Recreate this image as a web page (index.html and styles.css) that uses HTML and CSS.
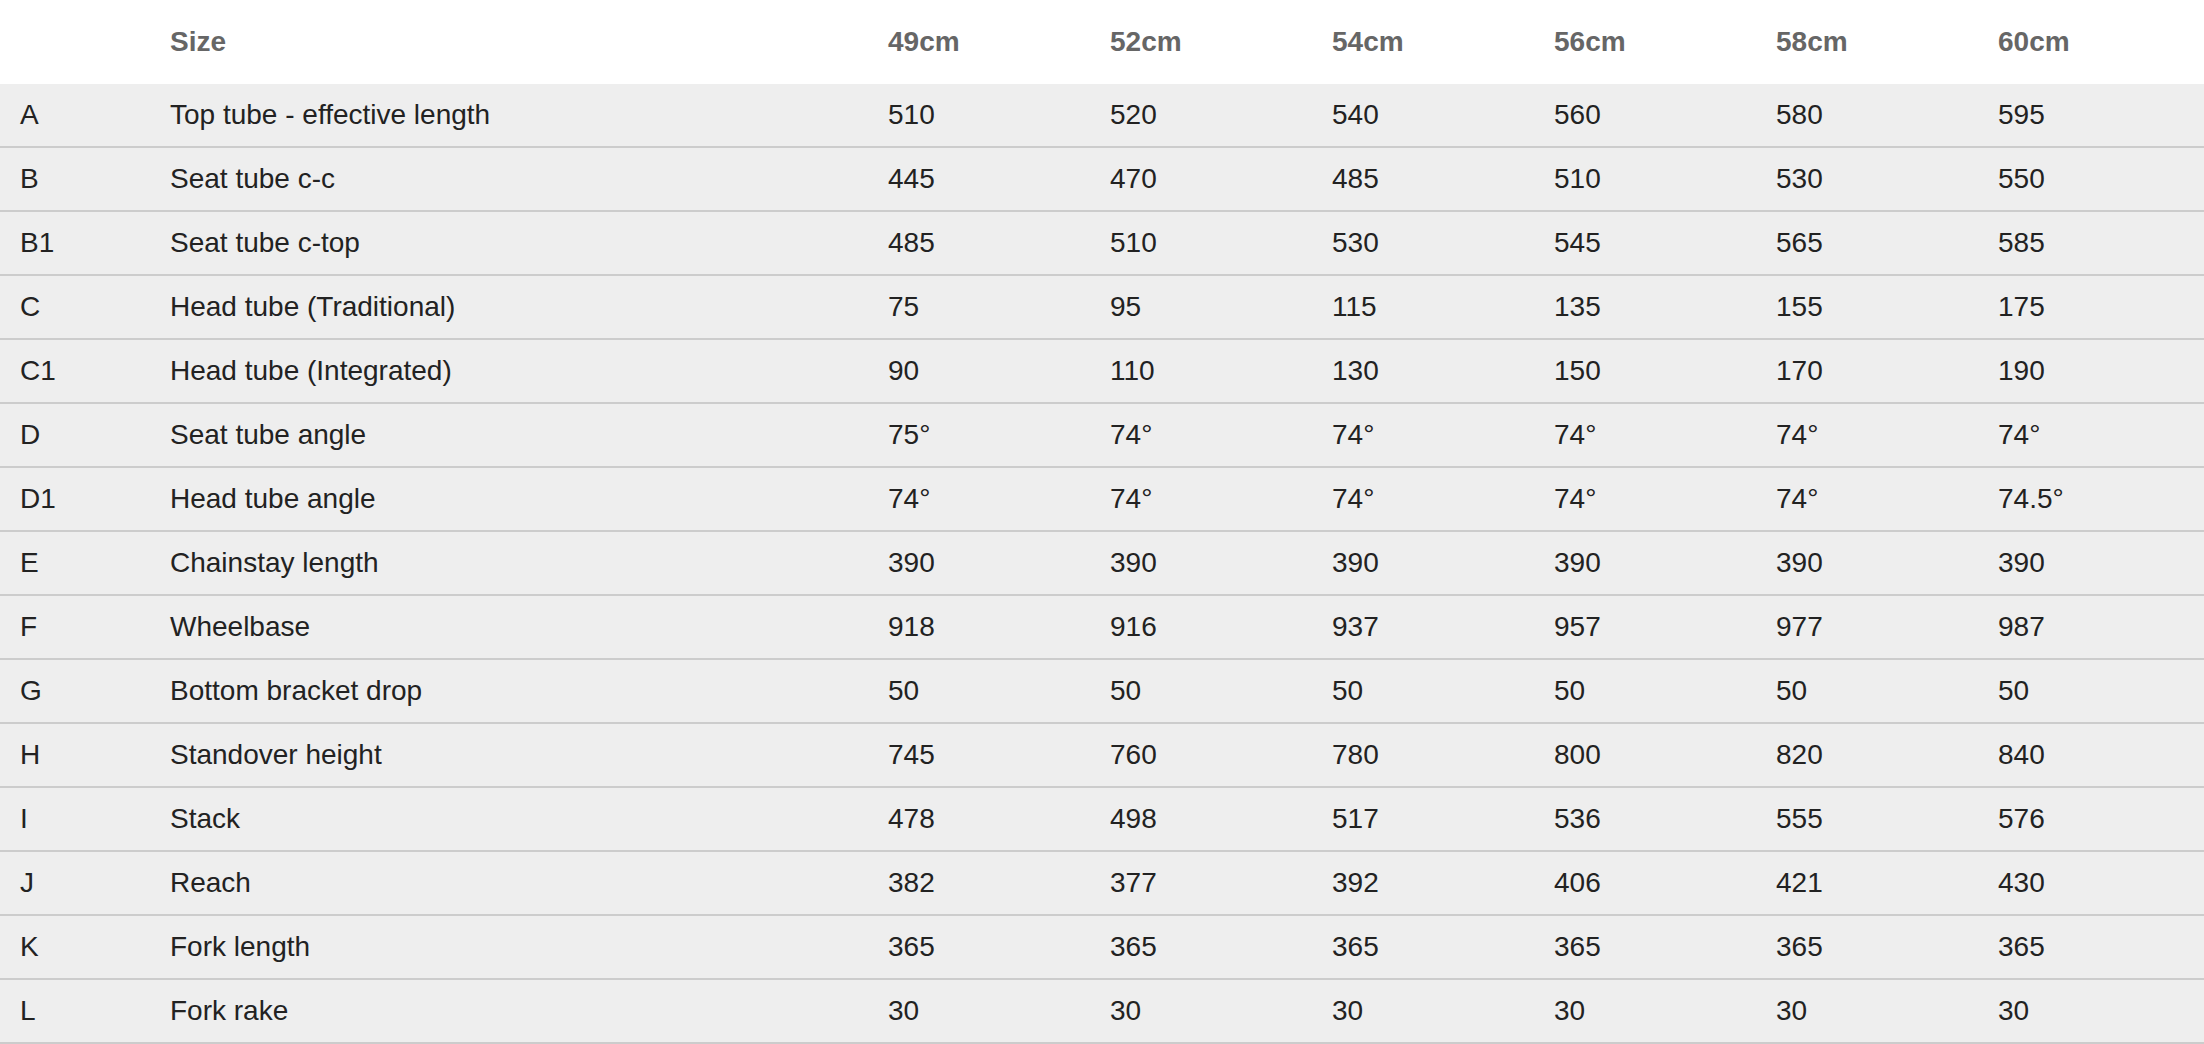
FILE: index.html
```html
<!DOCTYPE html>
<html>
<head>
<meta charset="utf-8">
<link rel="stylesheet" href="styles.css">
</head>
<body>
<table class="geo">
<colgroup>
<col class="c-key"><col class="c-name"><col class="c-val"><col class="c-val"><col class="c-val"><col class="c-val"><col class="c-val"><col class="c-last">
</colgroup>
<thead>
<tr><th></th><th>Size</th><th>49cm</th><th>52cm</th><th>54cm</th><th>56cm</th><th>58cm</th><th>60cm</th></tr>
</thead>
<tbody>
<tr><td>A</td><td>Top tube - effective length</td><td>510</td><td>520</td><td>540</td><td>560</td><td>580</td><td>595</td></tr>
<tr><td>B</td><td>Seat tube c-c</td><td>445</td><td>470</td><td>485</td><td>510</td><td>530</td><td>550</td></tr>
<tr><td>B1</td><td>Seat tube c-top</td><td>485</td><td>510</td><td>530</td><td>545</td><td>565</td><td>585</td></tr>
<tr><td>C</td><td>Head tube (Traditional)</td><td>75</td><td>95</td><td>115</td><td>135</td><td>155</td><td>175</td></tr>
<tr><td>C1</td><td>Head tube (Integrated)</td><td>90</td><td>110</td><td>130</td><td>150</td><td>170</td><td>190</td></tr>
<tr><td>D</td><td>Seat tube angle</td><td>75°</td><td>74°</td><td>74°</td><td>74°</td><td>74°</td><td>74°</td></tr>
<tr><td>D1</td><td>Head tube angle</td><td>74°</td><td>74°</td><td>74°</td><td>74°</td><td>74°</td><td>74.5°</td></tr>
<tr><td>E</td><td>Chainstay length</td><td>390</td><td>390</td><td>390</td><td>390</td><td>390</td><td>390</td></tr>
<tr><td>F</td><td>Wheelbase</td><td>918</td><td>916</td><td>937</td><td>957</td><td>977</td><td>987</td></tr>
<tr><td>G</td><td>Bottom bracket drop</td><td>50</td><td>50</td><td>50</td><td>50</td><td>50</td><td>50</td></tr>
<tr><td>H</td><td>Standover height</td><td>745</td><td>760</td><td>780</td><td>800</td><td>820</td><td>840</td></tr>
<tr><td>I</td><td>Stack</td><td>478</td><td>498</td><td>517</td><td>536</td><td>555</td><td>576</td></tr>
<tr><td>J</td><td>Reach</td><td>382</td><td>377</td><td>392</td><td>406</td><td>421</td><td>430</td></tr>
<tr><td>K</td><td>Fork length</td><td>365</td><td>365</td><td>365</td><td>365</td><td>365</td><td>365</td></tr>
<tr><td>L</td><td>Fork rake</td><td>30</td><td>30</td><td>30</td><td>30</td><td>30</td><td>30</td></tr>
</tbody>
</table>
</body>
</html>
```
FILE: styles.css
```css
html, body {
  margin: 0;
  padding: 0;
  background: #ffffff;
}
body {
  font-family: "Liberation Sans", Arial, sans-serif;
  font-size: 28px;
  color: #222222;
}
.geo {
  width: 2204px;
  border-collapse: collapse;
  table-layout: fixed;
}
.c-key { width: 150px; }
.c-name { width: 718px; }
.c-val { width: 222px; }
.c-last { width: 226px; }
.geo th {
  height: 84px;
  padding: 0 0 0 20px;
  text-align: left;
  font-weight: bold;
  color: #666666;
  vertical-align: middle;
  background: #ffffff;
}
.geo td {
  height: 62px;
  padding: 0 0 0 20px;
  text-align: left;
  vertical-align: middle;
  background: #eeeeee;
  border-bottom: 2px solid #cccccc;
  white-space: nowrap;
}
.geo th, .geo td {
  box-sizing: content-box;
}
```
